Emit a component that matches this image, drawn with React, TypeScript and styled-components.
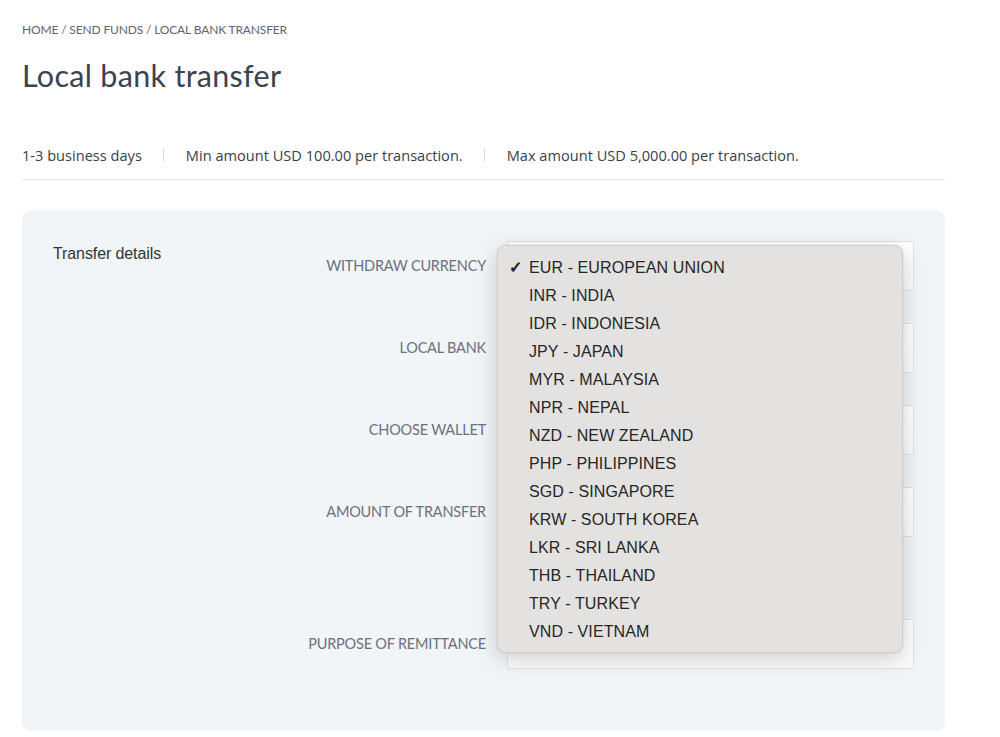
import React from "react";
import styled, { createGlobalStyle } from "styled-components";

const Global = createGlobalStyle`
  html, body { margin: 0; padding: 0; background: #ffffff; }
  body { font-family: "Lato", "Liberation Sans", sans-serif; }
  * { box-sizing: border-box; }
`;

const Page = styled.div`
  width: 1000px;
  min-height: 737px;
  padding: 22px 55px 0 22px;
`;

const Breadcrumb = styled.div`
  font-family: "Lato", sans-serif;
  font-size: 12px;
  line-height: 16px;
  color: #5d6472;
  text-transform: uppercase;
  letter-spacing: -0.15px;
`;

const Title = styled.h1`
  margin: 19px 0 0;
  font-family: "Lato", sans-serif;
  font-weight: 400;
  font-size: 30.5px;
  line-height: 36px;
  color: #3c424e;
  letter-spacing: 0.3px;
`;

const InfoRow = styled.div`
  display: flex;
  align-items: center;
  margin-top: 55px;
  padding-bottom: 17px;
  border-bottom: 1px solid #dfe4ea;
  font-family: "Open Sans", sans-serif;
  font-size: 14.6px;
  line-height: 20px;
  color: #3a3f47;
`;

const InfoItem = styled.span<{ $first?: boolean }>`
  padding: 0 21px 0 ${(p) => (p.$first ? "0" : "22px")};
  border-left: ${(p) => (p.$first ? "none" : "1px solid #d6dbe1")};
  line-height: 14px;
`;

const Panel = styled.section`
  margin-top: 30px;
  background: #f2f5f8;
  border-radius: 9px;
  padding: 31px 31px 62px 31px;
  display: flex;
`;

const SectionTitle = styled.h2`
  flex: 1;
  margin: 3px 0 0;
  font-family: "Liberation Sans", Arial, sans-serif;
  font-weight: 400;
  font-size: 16px;
  line-height: 20px;
  color: #343434;
  letter-spacing: -0.1px;
`;

const FormGrid = styled.div`
  display: grid;
  grid-template-columns: 180px 407px;
  column-gap: 21px;
  row-gap: 32px;
`;

const Label = styled.label`
  text-align: right;
  height: 50px;
  line-height: 50px;
  font-family: "Lato", sans-serif;
  font-size: 14.5px;
  color: #6a717d;
  text-transform: uppercase;
  letter-spacing: -0.2px;
  white-space: nowrap;
`;

const FieldCell = styled.div`
  position: relative;
  display: flex;
  flex-direction: column;
`;

const Input = styled.div`
  height: 50px;
  background: linear-gradient(#ffffff, #fbfbfb);
  border: 1px solid #dde2e8;
  font-family: "Open Sans", sans-serif;
  font-size: 14px;
  line-height: 48px;
  padding: 0 14px;
  color: #4a4f57;
`;

const Helper = styled.div`
  height: 50px;
  padding-top: 8px;
  font-family: "Open Sans", sans-serif;
  font-size: 12px;
  color: #8a9099;
`;

const Menu = styled.ul`
  position: absolute;
  left: -10px;
  top: 4px;
  width: 406px;
  margin: 0;
  padding: 8px 0 6px;
  list-style: none;
  background: #e3e2e0;
  border: 1px solid #cfcecc;
  border-radius: 8px;
  box-shadow: 0 6px 22px rgba(0, 0, 0, 0.18), 0 0 2px rgba(0, 0, 0, 0.08);
  z-index: 10;
`;

const MenuItem = styled.li`
  position: relative;
  height: 28px;
  line-height: 28px;
  padding-left: 31px;
  font-family: "Liberation Sans", Arial, sans-serif;
  font-size: 16px;
  color: #262626;
  letter-spacing: 0.1px;
`;

const Check = styled.span`
  position: absolute;
  left: 11px;
  top: 0;
  font-family: "DejaVu Sans", sans-serif;
  font-size: 16px;
  color: #1e1e1e;
  -webkit-text-stroke: 0.7px #1e1e1e;
`;

const currencies = [
  "EUR - EUROPEAN UNION",
  "INR - INDIA",
  "IDR - INDONESIA",
  "JPY - JAPAN",
  "MYR - MALAYSIA",
  "NPR - NEPAL",
  "NZD - NEW ZEALAND",
  "PHP - PHILIPPINES",
  "SGD - SINGAPORE",
  "KRW - SOUTH KOREA",
  "LKR - SRI LANKA",
  "THB - THAILAND",
  "TRY - TURKEY",
  "VND - VIETNAM",
];

export default function App() {
  return (
    <>
      <Global />
      <Page>
        <Breadcrumb>Home / Send funds / Local bank transfer</Breadcrumb>
        <Title>Local bank transfer</Title>
        <InfoRow>
          <InfoItem $first>1-3 business days</InfoItem>
          <InfoItem>Min amount USD 100.00 per transaction.</InfoItem>
          <InfoItem>Max amount USD 5,000.00 per transaction.</InfoItem>
        </InfoRow>
        <Panel>
          <SectionTitle>Transfer details</SectionTitle>
          <FormGrid>
            <Label>Withdraw currency</Label>
            <FieldCell>
              <Input>EUR - EUROPEAN UNION</Input>
              <Menu>
                {currencies.map((c, i) => (
                  <MenuItem key={c}>
                    {i === 0 && <Check>✓</Check>}
                    {c}
                  </MenuItem>
                ))}
              </Menu>
            </FieldCell>
            <Label>Local bank</Label>
            <FieldCell>
              <Input>Select bank</Input>
            </FieldCell>
            <Label>Choose wallet</Label>
            <FieldCell>
              <Input>USD wallet</Input>
            </FieldCell>
            <Label>Amount of transfer</Label>
            <FieldCell>
              <Input>0.00</Input>
              <Helper>Fee and exchange rate will be shown here.</Helper>
            </FieldCell>
            <Label>Purpose of remittance</Label>
            <FieldCell>
              <Input>Family support and living expenses</Input>
            </FieldCell>
          </FormGrid>
        </Panel>
      </Page>
    </>
  );
}
